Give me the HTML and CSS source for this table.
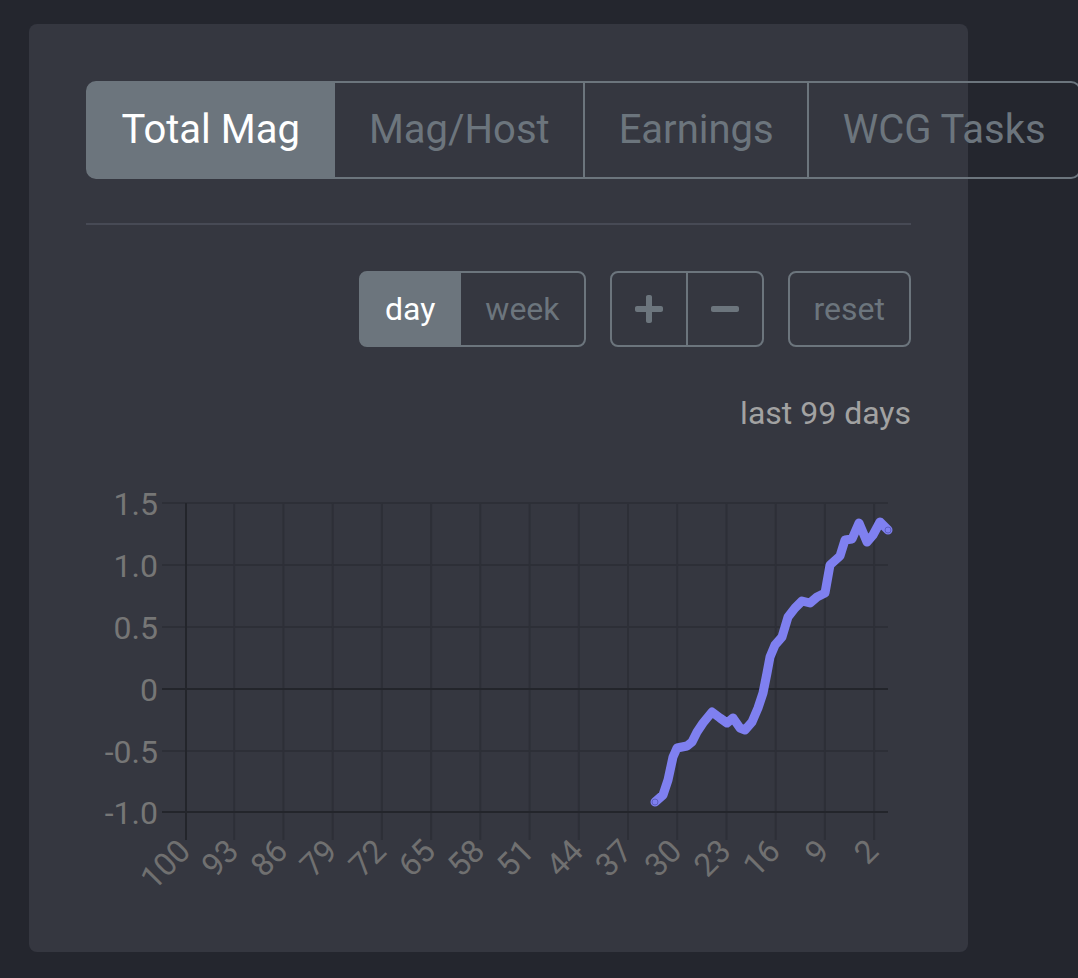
FILE: index.html
```html
<!DOCTYPE html>
<html lang="en">
<head>
<meta charset="utf-8">
<title>Total Mag</title>
<link rel="stylesheet" href="styles.css">
</head>
<body>
<div class="card">
  <div class="tabs">
    <button class="tab active">Total Mag</button>
    <button class="tab">Mag/Host</button>
    <button class="tab">Earnings</button>
    <button class="tab">WCG Tasks</button>
  </div>
  <hr class="divider">
  <div class="toolbar">
    <div class="group">
      <button class="btn active">day</button>
      <button class="btn">week</button>
    </div>
    <div class="group">
      <button class="btn icon" aria-label="zoom in"><svg viewBox="0 0 448 512" width="28" height="32"><path d="M416 208H272V64c0-17.67-14.33-32-32-32h-32c-17.67 0-32 14.33-32 32v144H32c-17.67 0-32 14.330-32 32v32c0 17.67 14.33 32 32 32h144v144c0 17.67 14.33 32 32 32h32c17.67 0 32-14.33 32-32V304h144c17.67 0 32-14.33 32-32v-32c0-17.670-14.33-32-32-32z"/></svg></button>
      <button class="btn icon" aria-label="zoom out"><svg viewBox="0 0 448 512" width="28" height="32"><path d="M416 208H32c-17.67 0-32 14.33-32 32v32c0 17.67 14.33 32 32 32h384c17.67 0 32-14.33 32-32v-32c0-17.67-14.33-32-32-32z"/></svg></button>
    </div>
    <div class="group">
      <button class="btn">reset</button>
    </div>
  </div>
  <div class="range">last 99 days</div>
  <svg class="chart" width="825" height="435" viewBox="86 460 825 435">
    <g class="grid">
      <line x1="162" y1="503" x2="888" y2="503"/>
      <line x1="162" y1="565" x2="888" y2="565"/>
      <line x1="162" y1="627" x2="888" y2="627"/>
      <line x1="162" y1="751" x2="888" y2="751"/>
      <line x1="234.2" y1="503" x2="234.2" y2="840"/>
      <line x1="283.4" y1="503" x2="283.4" y2="840"/>
      <line x1="332.7" y1="503" x2="332.7" y2="840"/>
      <line x1="381.9" y1="503" x2="381.9" y2="840"/>
      <line x1="431.1" y1="503" x2="431.1" y2="840"/>
      <line x1="480.3" y1="503" x2="480.3" y2="840"/>
      <line x1="529.6" y1="503" x2="529.6" y2="840"/>
      <line x1="578.8" y1="503" x2="578.8" y2="840"/>
      <line x1="628.0" y1="503" x2="628.0" y2="840"/>
      <line x1="677.2" y1="503" x2="677.2" y2="840"/>
      <line x1="726.5" y1="503" x2="726.5" y2="840"/>
      <line x1="775.7" y1="503" x2="775.7" y2="840"/>
      <line x1="824.9" y1="503" x2="824.9" y2="840"/>
      <line x1="874.1" y1="503" x2="874.1" y2="840"/>
    </g>
    <g class="axis">
      <line x1="162" y1="689" x2="888" y2="689"/>
      <line x1="162" y1="812" x2="888" y2="812"/>
      <line x1="186" y1="503" x2="186" y2="840"/>
    </g>
    <g class="ylabels">
      <text x="158" y="503" dy="0.36em">1.5</text>
      <text x="158" y="565" dy="0.36em">1.0</text>
      <text x="158" y="627" dy="0.36em">0.5</text>
      <text x="158" y="689" dy="0.36em">0</text>
      <text x="158" y="751" dy="0.36em">-0.5</text>
      <text x="158" y="812" dy="0.36em">-1.0</text>
    </g>
    <g class="xlabels">
      <text transform="translate(184 845) rotate(-45)" dy="0.36em">100</text>
      <text transform="translate(232.2 845) rotate(-45)" dy="0.36em">93</text>
      <text transform="translate(281.4 845) rotate(-45)" dy="0.36em">86</text>
      <text transform="translate(330.7 845) rotate(-45)" dy="0.36em">79</text>
      <text transform="translate(379.9 845) rotate(-45)" dy="0.36em">72</text>
      <text transform="translate(429.1 845) rotate(-45)" dy="0.36em">65</text>
      <text transform="translate(478.3 845) rotate(-45)" dy="0.36em">58</text>
      <text transform="translate(527.6 845) rotate(-45)" dy="0.36em">51</text>
      <text transform="translate(576.8 845) rotate(-45)" dy="0.36em">44</text>
      <text transform="translate(626.0 845) rotate(-45)" dy="0.36em">37</text>
      <text transform="translate(675.2 845) rotate(-45)" dy="0.36em">30</text>
      <text transform="translate(724.5 845) rotate(-45)" dy="0.36em">23</text>
      <text transform="translate(773.7 845) rotate(-45)" dy="0.36em">16</text>
      <text transform="translate(822.9 845) rotate(-45)" dy="0.36em">9</text>
      <text transform="translate(872.1 845) rotate(-45)" dy="0.36em">2</text>
    </g>
    <polyline class="series" points="655,802 663,795 668,780 673,757 677,748 687,746 692,742 697,732 703,723 712,712 720,718 727,723 733,718 740,728 745,730 752,722 758,708 763,693 767,673 770,657 775,645 782,637 788,617 795,608 802,601 810,603 817,597 825,593 830,565 840,556 845,540 852,539 859,523 867,542 873,535 880,522 888,530"/>
    <circle class="endpoint" cx="655" cy="802" r="3"/>
    <circle class="endpoint" cx="888" cy="530" r="3"/>
  </svg>
</div>
</body>
</html>
```

FILE: styles.css
```css
html, body {
  margin: 0;
  padding: 0;
}

body {
  background: #24262e;
  font-family: Roboto, "Noto Sans", "Liberation Sans", sans-serif;
  width: 1078px;
  height: 978px;
  overflow: hidden;
}

.card {
  box-sizing: border-box;
  width: 939px;
  height: 928px;
  margin: 24px 0 0 29px;
  padding: 57px;
  background: #353740;
  border-radius: 8px;
  display: flex;
  flex-direction: column;
}

.tabs {
  display: flex;
  white-space: nowrap;
  flex: none;
}

.tab {
  box-sizing: border-box;
  height: 98px;
  padding: 0 33.5px;
  margin: 0;
  font-family: inherit;
  font-size: 40px;
  line-height: 1;
  color: #6c757d;
  background: transparent;
  border: 2px solid #6c757d;
  flex: none;
}

.tab + .tab {
  margin-left: -2px;
}

.tab:first-child {
  border-radius: 10px 0 0 10px;
}

.tab:last-child {
  border-radius: 0 10px 10px 0;
}

.tab.active {
  background: #6c757d;
  color: #ffffff;
}

.divider {
  border: 0;
  height: 2px;
  background: #474a55;
  margin: 44px 0 46px;
  width: 825px;
}

.toolbar {
  display: flex;
  justify-content: flex-end;
  gap: 24px;
}

.group {
  display: flex;
}

.btn {
  box-sizing: border-box;
  height: 76px;
  padding: 0 24px;
  margin: 0;
  font-family: inherit;
  font-size: 32px;
  line-height: 1;
  color: #6c757d;
  background: transparent;
  border: 2px solid #6c757d;
  display: flex;
  align-items: center;
  justify-content: center;
}

.btn.icon {
  padding: 0 23px;
}

.btn + .btn {
  margin-left: -2px;
}

.btn:first-child {
  border-top-left-radius: 8px;
  border-bottom-left-radius: 8px;
}

.btn:last-child {
  border-top-right-radius: 8px;
  border-bottom-right-radius: 8px;
}

.btn.active {
  background: #6c757d;
  color: #ffffff;
}

.btn.icon svg {
  display: block;
  fill: #6c757d;
}

.range {
  margin-top: 42px;
  font-size: 32px;
  line-height: 48px;
  color: #a2a2a2;
  text-align: right;
}

.chart {
  display: block;
  margin-top: 23px;
  overflow: visible;
}

.grid line {
  stroke: #2d2f37;
  stroke-width: 2;
}

.axis line {
  stroke: #23252b;
  stroke-width: 2;
}

.ylabels text {
  font-family: Roboto, "Noto Sans", sans-serif;
  font-size: 32px;
  fill: #767676;
  text-anchor: end;
}

.xlabels text {
  font-family: Roboto, "Noto Sans", sans-serif;
  font-size: 32px;
  fill: #707070;
  text-anchor: end;
}

.series {
  fill: none;
  stroke: #7f80f0;
  stroke-width: 9;
  stroke-linejoin: round;
  stroke-linecap: round;
}

.endpoint {
  fill: #7f80f0;
  stroke: #5d5fc0;
  stroke-width: 1;
}
```
